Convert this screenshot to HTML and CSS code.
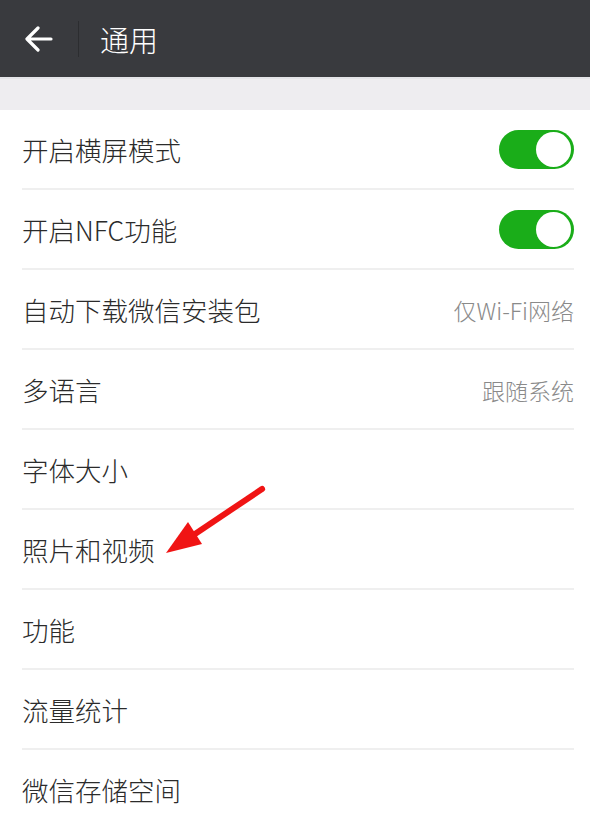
FILE: index.html
```html
<!DOCTYPE html>
<html lang="zh-CN">
<head>
<meta charset="utf-8">
<title>通用</title>
<link rel="stylesheet" href="styles.css">
</head>
<body>
<div class="page">
  <header class="topbar">
    <div class="back">
      <svg width="30" height="26" viewBox="0 0 30 26"><path d="M27 13 H4 M14 2 L3 13 L14 24" fill="none" stroke="#fff" stroke-width="3.2" stroke-linecap="round" stroke-linejoin="round"/></svg>
    </div>
    <div class="sep"></div>
    <div class="title">通用</div>
  </header>
  <div class="gap"></div>
  <ul class="list">
    <li class="row"><span class="label">开启横屏模式</span><span class="switch on"><span class="knob"></span></span></li>
    <li class="row"><span class="label">开启NFC功能</span><span class="switch on"><span class="knob"></span></span></li>
    <li class="row"><span class="label">自动下载微信安装包</span><span class="value">仅Wi-Fi网络</span></li>
    <li class="row"><span class="label">多语言</span><span class="value">跟随系统</span></li>
    <li class="row"><span class="label">字体大小</span></li>
    <li class="row"><span class="label">照片和视频</span></li>
    <li class="row"><span class="label">功能</span></li>
    <li class="row"><span class="label">流量统计</span></li>
    <li class="row"><span class="label">微信存储空间</span></li>
  </ul>
  <svg class="pointer" width="590" height="828" viewBox="0 0 590 828">
    <line x1="262" y1="489" x2="195" y2="534" stroke="#f01414" stroke-width="6" stroke-linecap="round"/>
    <polygon points="166,553 188,522 202,544" fill="#f01414"/>
  </svg>
</div>
</body>
</html>
```
FILE: styles.css
```css
* { box-sizing: border-box; }
html, body { margin: 0; padding: 0; }
body {
  width: 590px;
  height: 828px;
  overflow: hidden;
  background: #fff;
  font-family: "Noto Sans CJK SC", "Noto Sans", sans-serif;
}
.page { position: relative; width: 590px; height: 828px; }
.topbar {
  height: 79px;
  background: #393a3e;
  display: flex;
  align-items: center;
  border-bottom: 2px solid #e4e4e8;
}
.back {
  width: 78px;
  display: flex;
  align-items: center;
  padding-left: 24px;
  padding-top: 1px;
}
.sep {
  width: 1px;
  height: 36px;
  background: #2c2d30;
}
.title {
  color: #fff;
  font-size: 29px;
  font-weight: 300;
  padding-left: 21px;
}
.gap {
  height: 31px;
  background: #eeedf0;
}
.list {
  list-style: none;
  margin: 0;
  padding: 0;
  background: #fff;
}
.row {
  height: 80px;
  margin: 0 16px 0 22px;
  padding-top: 1px;
  display: flex;
  align-items: center;
  justify-content: space-between;
  border-bottom: 2px solid #efefef;
}
.label {
  font-size: 26.5px;
  font-weight: 300;
  color: #2b2b2b;
}
.value {
  font-size: 23px;
  font-weight: 300;
  color: #8a8a8a;
}
.switch {
  width: 75px;
  height: 39px;
  border-radius: 20px;
  background: #1aad19;
  position: relative;
}
.knob {
  position: absolute;
  right: 3px;
  top: 2px;
  width: 35px;
  height: 35px;
  border-radius: 50%;
  background: #fff;
}
.pointer {
  position: absolute;
  left: 0;
  top: 0;
  pointer-events: none;
}
```
